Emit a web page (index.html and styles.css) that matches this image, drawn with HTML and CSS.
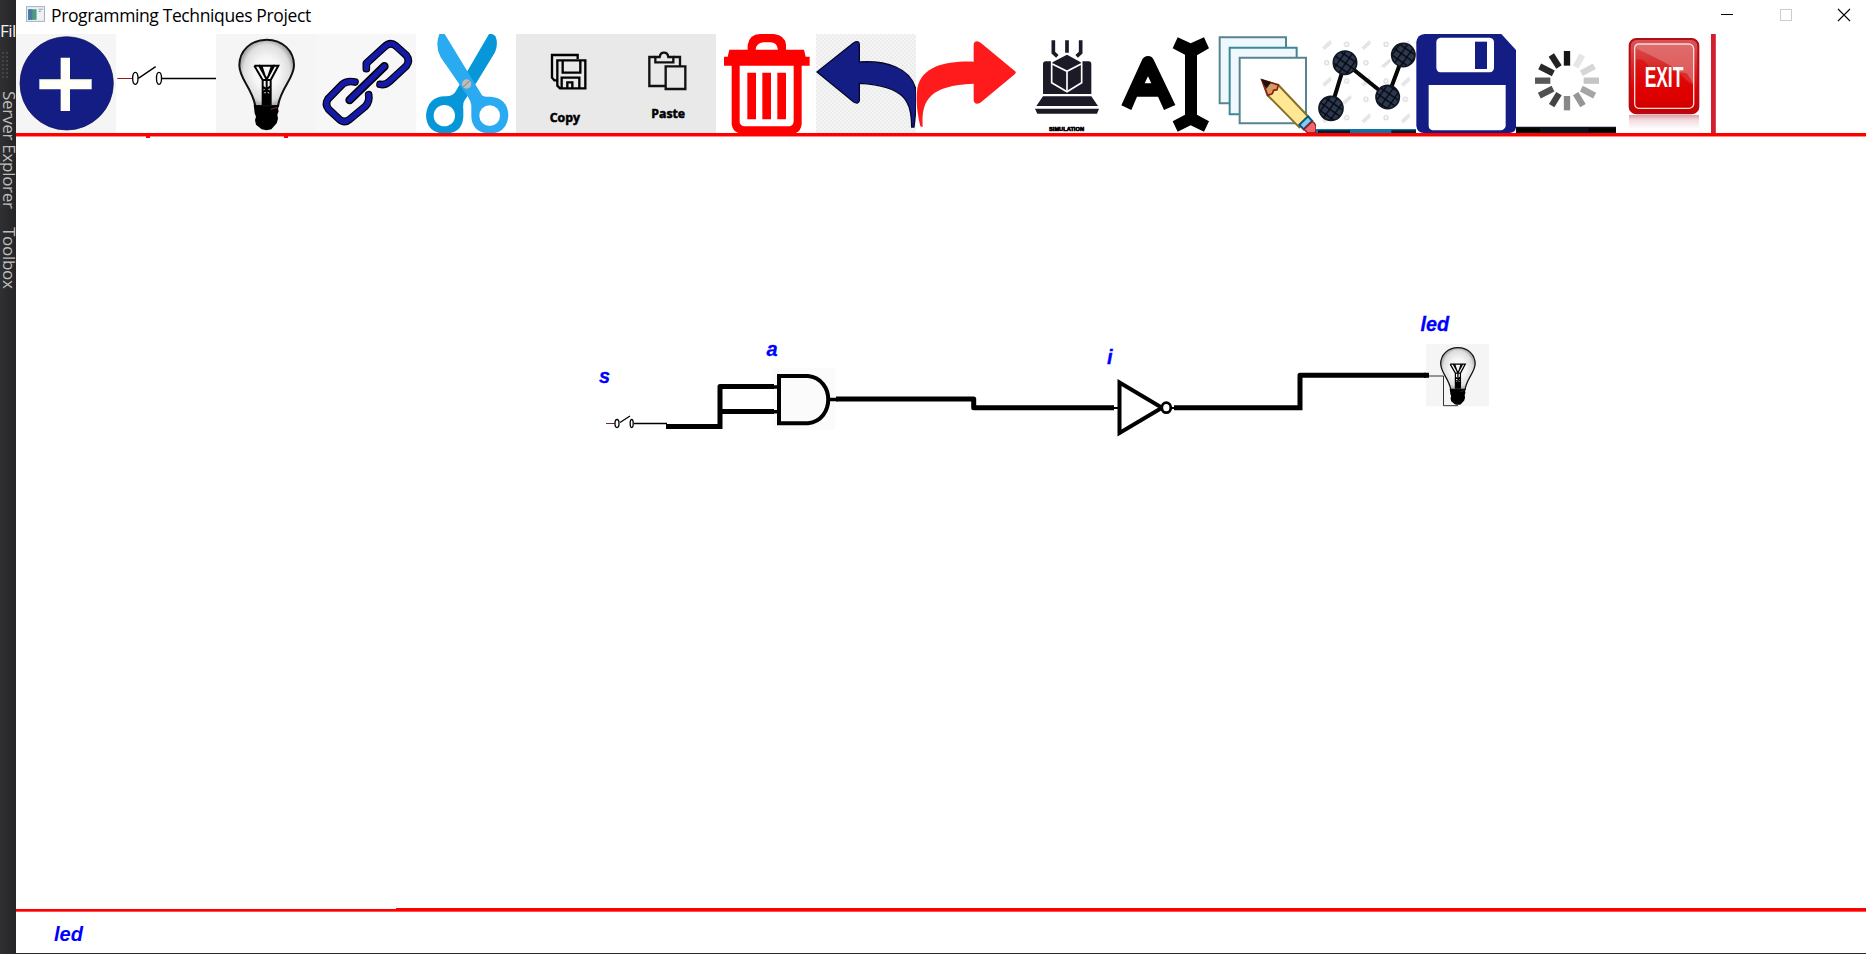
FILE: index.html
```html
<!DOCTYPE html>
<html lang="en">
<head>
<meta charset="utf-8">
<title>Programming Techniques Project</title>
<link rel="stylesheet" href="styles.css">
</head>
<body>
<svg class="defs" width="0" height="0" aria-hidden="true">
  <defs>
    <radialGradient id="glass"><stop offset=".45" stop-color="#f7f7f7"/><stop offset=".85" stop-color="#dedede"/><stop offset="1" stop-color="#aaa"/></radialGradient>
    <linearGradient id="exitred" x2="0" y2="1"><stop offset="0" stop-color="#d95757"/><stop offset=".45" stop-color="#d82020"/><stop offset=".7" stop-color="#e30000"/><stop offset="1" stop-color="#c40000"/></linearGradient>
    <linearGradient id="reflect" x2="0" y2="1"><stop offset="0" stop-color="#dc9fa8"/><stop offset=".35" stop-color="#f3dcdf"/><stop offset="1" stop-color="#fff"/></linearGradient>
    <pattern id="dots" width="12" height="12" patternUnits="userSpaceOnUse"><rect width="12" height="12" fill="#ececec"/><circle cx="3" cy="3" r="3" fill="#f8f8f8"/><circle cx="9" cy="9" r="3" fill="#f8f8f8"/></pattern>
    <pattern id="mesh" width="20" height="20" patternUnits="userSpaceOnUse" patternTransform="rotate(35)"><rect width="20" height="20" fill="#2c3850"/><path d="M0 0H20M0 0V20" stroke="#05070c" stroke-width="8"/></pattern>
    <pattern id="marks" x="318" y="102" width="118" height="110" patternUnits="userSpaceOnUse"><g stroke="#dadada" stroke-width="4" fill="none"><path d="M20 42l24-22M24 46l22-20"/><circle cx="92" cy="31" r="6"/><circle cx="32" cy="86" r="6"/><path d="M78 98l26-22M84 100l22-20"/></g></pattern>
    <symbol id="bulb" viewBox="648 102 300 297">
      <rect x="648" y="102" width="300" height="297" fill="#f5f5f5"/>
      <path d="M800 119C752 119 718 153 718 196C718 238 755 260 766 318H834C843 262 882 236 882 196C882 153 848 119 800 119Z" fill="url(#glass)" stroke="#111" stroke-width="6"/>
      <path d="M763 197H835L812 240V315M763 197L788 240V315M776 194L800 238L824 194M785 200L795 230M815 200L805 230M800 235V315M788 240H812M788 260L812 278M812 258L788 278M794 280V315M806 280V315" fill="none" stroke="#000" stroke-width="6"/>
      <path d="M761 314Q800 324 838 314L834 326L836 334L832 344L834 356L830 370L814 388Q800 393 785 388L768 374L765 360L768 350L764 340Z" fill="#000"/>
      <path d="M812 328L832 322" stroke="#a44" stroke-width="2"/>
    </symbol>
  </defs>
</svg>
<div class="desktop">
  <aside class="ide">
    <span class="ide-menu">Fil</span>
    <span class="ide-grip"></span>
    <span class="ide-tab">Server Explorer</span>
    <span class="ide-tab toolbox">Toolbox</span>
  </aside>
  <main class="window">
    <header class="titlebar">
      <svg class="app-icon" viewBox="0 0 18 15"><rect x=".5" y=".5" width="17" height="14" fill="#eef1f5" stroke="#a9b4c2"/><rect x="2" y="3" width="8" height="10" fill="#4b9c83"/><path d="M2 3h4v10H2z" fill="#4779a5"/><path d="M12 3h4M12 5h2" stroke="#8aa"/></svg>
      <h1 class="title">Programming Techniques Project</h1>
      <div class="controls">
        <svg viewBox="0 0 12 12"><path d="M0 5.500H12" stroke="#000"/></svg>
        <svg viewBox="0 0 12 12"><rect x=".5" y=".5" width="11" height="11" fill="none" stroke="#ccc"/></svg>
        <svg viewBox="0 0 12 12"><path d="M0 0L12 12M12 0L0 12" stroke="#000" stroke-width="1.100"/></svg>
      </div>
    </header>
    <nav class="toolbar">
      <svg class="tool soft" viewBox="48 102 300 297"><circle cx="200" cy="250" r="140" fill="#141d83" stroke="#0b1050" stroke-width="2"/><path d="M182 173H210V238H275V268H210V333H182V268H118V238H182Z" fill="#fffff8"/><path d="M118 239H182M210 239H275" stroke="#c7dc92" stroke-width="2"/></svg>
      <svg class="tool" viewBox="348 102 300 297"><g fill="none" stroke="#000" stroke-width="4"><path d="M352 235.500H396" stroke="#842020" stroke-width="3"/><ellipse cx="406" cy="235" rx="8" ry="18"/><ellipse cx="477" cy="235" rx="7.500" ry="18"/><path d="M415 235L467 200M486 235.500H648"/></g></svg>
      <svg class="tool"><use href="#bulb"/></svg>
      <svg class="tool link" viewBox="18 102 300 297"><g fill="none" stroke-linecap="round" stroke-linejoin="round"><g stroke="#000" stroke-width="23"><path d="M169 206V190L224 140Q241 124 258 138L289 166Q301 182 289 198L239 244Q226 256 210 253M135 246Q113 241 98 252L54 297Q44 313 56 328L87 357Q103 372 119 358L165 320Q180 305 176 284"/><path d="M119 300L223 199" stroke-width="26"/></g><path d="M169 206V190L224 140Q241 124 258 138L289 166Q301 182 289 198L239 244Q226 256 210 253M135 246Q113 241 98 252L54 297Q44 313 56 328L87 357Q103 372 119 358L165 320Q180 305 176 284M119 300L223 199" stroke="#1519a8" stroke-width="16"/></g></svg>
      <svg class="tool" viewBox="318 102 300 297"><path d="M537 102Q548 100 556 108Q566 130 555 157L502 244L463 302Q458 309 460 330V350Q457 400 404 401Q350 399 348 345Q354 290 405 289Q430 290 439 271L471 215Z" fill="#0797d8"/><path d="M388 102H404L515 284Q520 292 543 290Q594 295 595 347Q591 398 540 401Q487 398 484 350V316Q482 302 472 287L392 172Q374 138 388 102Z" fill="#29aaf1"/><circle cx="403" cy="347" r="32" fill="#fff"/><circle cx="539" cy="347" r="31" fill="#fff"/><circle cx="470" cy="252" r="14" fill="#bdbdb8"/><path d="M460 261L479 242" stroke="#92736d" stroke-width="3"/></svg>
      <svg class="tool gray" viewBox="618 102 300 297"><g fill="none" stroke="#000" stroke-width="7"><path d="M742 241H733L726 233V165H803V177"/><path d="M742 181H826V265H750L742 257ZM758 181V218H811V181M755 265V233H808V265M772 264V247H787V264"/></g><text class="caption" x="719" y="367" textLength="91" lengthAdjust="spacingAndGlyphs">Copy</text></svg>
      <svg class="tool gray" viewBox="-12 102 300 297"><g fill="none" stroke="#111" stroke-width="7"><path d="M135 258H88V171H105M160 171H180V197M137 199H196V267H137Z"/><path d="M106 187V171H119Q121 158 132 158Q143 158 145 171H160V187Z"/></g><text class="caption" x="94" y="355" textLength="101" lengthAdjust="spacingAndGlyphs">Paste</text></svg>
      <svg class="tool" viewBox="288 102 300 297"><g fill="red"><path fill-rule="evenodd" d="M383 149V135Q388 103 420 102H462Q496 106 498 135V149H552L557 170H569V197H545V373Q542 399 518 401H365Q338 398 335 373V197H312V170H323L328 149ZM407 149H474Q471 127 451 127H430Q409 129 407 149ZM359 197V367Q361 378 374 379H508Q520 377 521 364V197Z"/><path d="M382 218H408V358H382ZM427 218H453V358H427ZM472 218H498V358H472Z"/></g></svg>
      <svg class="tool" viewBox="588 102 300 297"><rect x="588" y="102" width="300" height="297" fill="url(#dots)"/><path d="M591 216L700 129Q717 119 718 133V186C800 181 872 204 887 267Q892 300 882 381H875C874 310 861 257 718 250V302Q714 314 701 306Z" fill="#141d83" stroke="#05082e" stroke-width="4"/></svg>
      <svg class="tool" viewBox="18 102 300 297"><path d="M318 216L212 128Q194 118 191 132V185C104 183 37 199 22 264Q15 315 31 379L38 381C35 310 48 256 191 251V302Q195 316 211 308L315 222Z" fill="#ff1b1b"/></svg>
      <svg class="tool" viewBox="318 102 300 297"><g fill="#1b1a26"><path d="M407 184H536Q544 184 544 193V282H399V193Q399 184 407 184ZM399 289H544L564 318H379ZM375 326H567L561 341H382Z"/><path d="M471 161L515 185V248L471 275L425 248V185Z" stroke="#fff" stroke-width="5"/></g><path d="M427 192L471 214L513 192M471 214V272" stroke="#fff" stroke-width="5" fill="none"/><path d="M430 121V158L442 169M471 121V158M512 121V158L500 169" stroke="#1b1a26" stroke-width="11" fill="none"/><text class="tiny" x="417" y="394" textLength="105" lengthAdjust="spacingAndGlyphs">SIMULATION</text></svg>
      <svg class="tool" viewBox="618 102 300 297"><path fill-rule="evenodd" d="M697 178Q702 169 714 168Q727 169 731 179L796 315L762 330L744 290H681L664 330L634 316ZM714 229L704 250H724ZM803 112L842 130L882 112L897 145L861 166V344L897 364L882 395L842 376L803 395L788 364L825 344V164L788 145Z"/></svg>
      <svg class="tool" viewBox="18 102 300 297"><g fill="#f0f8ff" stroke="#568590" stroke-width="6"><path d="M29 112H228V310H29Z"/><path d="M59 143H260V343H59Z" stroke="#3c8996"/><path d="M89 173H288V370H89Z" fill="#fff"/></g><path d="M156 240L205 255L296 351L268 382L173 286Z" fill="#ffe793" stroke="#85702a" stroke-width="6"/><path d="M156 240L205 255L201 269L191 271L187 281L173 286Z" fill="#d49b62" stroke="#88201b" stroke-width="5"/><path d="M153 237L184 247L169 266Z" fill="#21120f"/><path d="M268 374L294 349L307 363L281 388Z" fill="#8ac9e9" stroke="#075681" stroke-width="6"/><path d="M282 388L306 365Q323 371 316 399H293Z" fill="#ef6672" stroke="#8f1b18" stroke-width="4"/></svg>
      <svg class="tool" viewBox="318 102 300 297"><rect x="318" y="102" width="300" height="280" fill="url(#marks)"/><path d="M363 325L405 188L533 291L580 165" stroke="#080808" stroke-width="12" fill="none"/><g fill="url(#mesh)" stroke="#111722" stroke-width="5"><circle cx="363" cy="325" r="36"/><circle cx="405" cy="188" r="35"/><circle cx="533" cy="291" r="35"/><circle cx="580" cy="165" r="35"/></g><path d="M318 387H618V399H318Z" fill="#1273a3"/><path d="M324 395H420M544 395H618" stroke="#061e2c" stroke-width="9"/></svg>
      <svg class="tool" viewBox="618 102 300 297"><path d="M644 102H874L918 150V382Q916 399 898 399H642Q621 398 619 377V126Q622 104 644 102Z" fill="#141d83"/><path d="M692 113H839Q851 114 852 126V203Q851 216 839 217H691Q680 215 679 203V126Q680 114 692 113ZM656 255H887V379Q883 390 873 391H668Q657 389 656 378Z" fill="#fff"/><path d="M795 125H831V207H795Z" fill="#141d83"/></svg>
      <svg class="tool" viewBox="18 102 300 297"><g stroke-width="19"><path d="M171 153V197" stroke="#151515"/><path d="M217 165L197 201" stroke="#e6e6e6"/><path d="M253 199L214 220" stroke="#d6d6d6"/><path d="M267 242H221" stroke="#c5c5c5"/><path d="M254 287L214 266" stroke="#a5a5a5"/><path d="M219 317L197 281" stroke="#969696"/><path d="M171 331V288" stroke="#888"/><path d="M125 317L147 281" stroke="#444"/><path d="M88 287L129 266" stroke="#505050"/><path d="M75 242H121" stroke="#585858"/><path d="M89 199L130 220" stroke="#292929"/><path d="M124 165L147 201" stroke="#222"/></g><path d="M18 380H318V399H18Z" fill="#0b111d"/><path d="M20 391H90M236 391H318" stroke="#000" stroke-width="12"/></svg>
      <svg class="tool exit" viewBox="318 102 285 297"><path d="M357 345H567V388H357Z" fill="url(#reflect)"/><rect x="359" y="117" width="206" height="223" rx="20" fill="url(#exitred)" stroke="#b20d16" stroke-width="6"/><path d="M377 145Q430 170 463 187Q492 201 520 232Q539 252 551 253V143Q550 134 538 133H387Q377 134 377 145Z" fill="#e47c7c" opacity=".65"/><path d="M377 180Q400 170 419 203Q450 205 530 220L551 252V315H377Z" fill="#df0000" opacity=".55"/><path d="M385 132Q374 134 374 145V312Q375 324 387 325H538Q550 323 551 312V145Q549 133 537 132Z" fill="none" stroke="#f7dddd" stroke-width="4"/><text class="exit-text" x="404" y="261" textLength="116" lengthAdjust="spacingAndGlyphs">EXIT</text></svg>
      <span class="toolbar-end"></span>
    </nav>
    <div class="rule-top"><span></span><span></span></div>
    <svg class="canvas" viewBox="16 138 1850 769">
      <rect x="773" y="368" width="62" height="62" fill="#fbfbfb"/>
      <g fill="none" stroke="#000">
        <path d="M606 423.500H615" stroke="#842020"/><ellipse cx="617" cy="423.500" rx="2" ry="4" stroke-width="1.300"/><ellipse cx="631.700" cy="423.500" rx="1.500" ry="4" stroke-width="1.300"/><path d="M620 422.500L630 416M634 423.500H667" stroke-width="1.300"/>
        <g stroke-width="5" stroke-linejoin="round">
          <path d="M666 426.500H720M720 429V386.500H774M720 411.500H774"/>
          <path d="M836 399H973.700V407.700H1114"/>
          <path d="M1174 407.700H1302.500M1300 408V375.300H1429"/>
        </g>
        <path d="M773 387H779M773 411.700H779M829 399.500H838" stroke-width="3.500"/>
        <path d="M779 376H808C835 379 835 420 808 423.300H779Z" stroke-width="4"/>
        <path d="M1113 408H1119M1171 408H1177" stroke-width="2"/>
        <path d="M1119.500 382.500L1162 407.700L1119.500 433Z" stroke-width="4"/>
        <ellipse cx="1166.300" cy="407.700" rx="4.500" ry="5" stroke-width="2.800" fill="#fff"/>
      </g>
      <use href="#bulb" x="1426" y="344" width="63" height="62.600"/>
      <path d="M1429 376H1443.500V405.700H1458" fill="none" stroke="#333"/>
      <path d="M1424 375.300H1429" stroke="#000" stroke-width="5"/>
      <g class="label">
        <text x="599" y="382.700">s</text>
        <text x="766.500" y="355.500">a</text>
        <text x="1107" y="364">i</text>
        <text x="1420.500" y="331.200" textLength="28.500" lengthAdjust="spacingAndGlyphs">led</text>
      </g>
    </svg>
    <div class="rule-bottom"><span class="thin"></span><span class="thick"></span></div>
    <footer class="status">led</footer>
  </main>
</div>
</body>
</html>
```
FILE: styles.css
```css
* { box-sizing: border-box; }
body { margin: 0; background: #2b2b2d; overflow: hidden; }
.defs { position: absolute; }
.desktop { display: flex; width: 1866px; height: 954px; }
.ide {
  flex: none; width: 16px; height: 954px;
  display: flex; flex-direction: column; align-items: flex-start;
  background: linear-gradient(90deg, #303032, #252527);
  color: #bdbdbd; font: 17px/17px "Open Sans", sans-serif;
}
.ide-menu { margin-top: 22px; color: #f1f1f1; white-space: nowrap; letter-spacing: -.5px; }
.ide-grip { width: 7px; height: 27px; margin: 12px 0 13px 1px; background: radial-gradient(circle, #444446 1px, transparent 1px) 0 0 / 4px 4px; }
.ide-tab { writing-mode: vertical-rl; white-space: nowrap; line-height: 18px; letter-spacing: -.28px; }
.ide-tab.toolbox { margin-top: 18px; }
.window { display: flex; flex: none; flex-direction: column; width: 1850px; height: 953px; background: #fff; }
.titlebar { height: 34px; display: flex; align-items: flex-start; padding-left: 10px; }
.app-icon { width: 19px; height: 16px; margin-top: 6px; }
.title { margin: 3px 0 0 6px; font: 17.5px/24px "Open Sans", sans-serif; letter-spacing: -.38px; color: #000; white-space: nowrap; }
.controls { display: flex; gap: 46px; margin: 9px 16px 0 auto; }
.controls svg { width: 12px; height: 12px; overflow: visible; }
.controls svg:first-child { margin-right: 1px; }
.toolbar { display: flex; height: 99px; }
.tool { display: block; flex: none; width: 100px; height: 99px; background: #fff; }
.tool.soft { background: #f5f5f5; }
.tool.link { background: #f7f7f7; }
.tool.gray { background: #e9e9e9; }
.tool.exit { width: 95px; }
.toolbar-end { width: 5px; height: 99px; background: #d21f30; border-right: 1px solid #e04b5b; }
.caption { font: bold 36px "Open Sans", sans-serif; stroke: #000; stroke-width: 1.5px; }
.tiny { font: bold 17px "Liberation Sans", sans-serif; stroke: #000; stroke-width: 2px; }
.exit-text { font: bold 88px "Liberation Sans", sans-serif; fill: #fff; }
.rule-top { display: flex; gap: 134px; height: 5px; padding: 3px 0 0 130px; background: linear-gradient(red 3px, #ff8a8a 3px, #ff8a8a 4px, #fff 4px); }
.rule-top span { width: 4px; height: 2px; background: red; }
.canvas { display: block; width: 1850px; height: 769px; }
.label text { font: italic bold 20px "Liberation Sans", sans-serif; fill: #00f; stroke: #00f; stroke-width: .3px; }
.rule-bottom { display: flex; align-items: flex-end; height: 5px; }
.rule-bottom .thin { width: 380px; height: 3px; background: red; border-bottom: 1px solid #ff5050; }
.rule-bottom .thick { flex: 1; height: 4px; background: red; border-bottom: 1px solid #ff5050; }
.status { flex: 1; padding: 10px 0 0 38px; font: italic bold 20px/24px "Liberation Sans", sans-serif; color: #00f; }
```
